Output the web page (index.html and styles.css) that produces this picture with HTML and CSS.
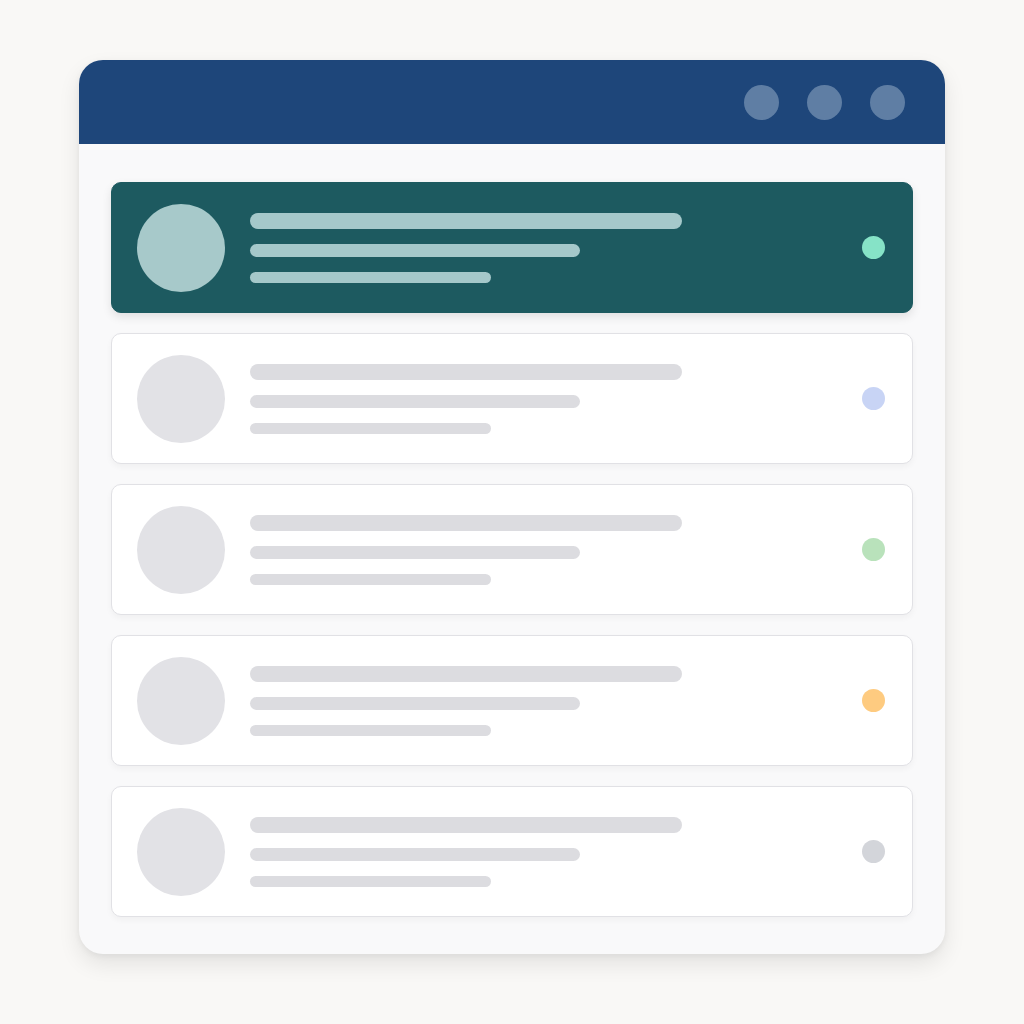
FILE: index.html
```html
<!DOCTYPE html>
<html>
<head>
<meta charset="utf-8">
<link rel="stylesheet" href="styles.css">
</head>
<body>
<div class="window">
  <div class="titlebar">
    <span class="tdot"></span><span class="tdot"></span><span class="tdot"></span>
  </div>
  <div class="list">
    <div class="card active">
      <div class="avatar"></div>
      <div class="lines"><div class="l1"></div><div class="l2"></div><div class="l3"></div></div>
      <div class="status mint"></div>
    </div>
    <div class="card">
      <div class="avatar"></div>
      <div class="lines"><div class="l1"></div><div class="l2"></div><div class="l3"></div></div>
      <div class="status blue"></div>
    </div>
    <div class="card">
      <div class="avatar"></div>
      <div class="lines"><div class="l1"></div><div class="l2"></div><div class="l3"></div></div>
      <div class="status green"></div>
    </div>
    <div class="card">
      <div class="avatar"></div>
      <div class="lines"><div class="l1"></div><div class="l2"></div><div class="l3"></div></div>
      <div class="status orange"></div>
    </div>
    <div class="card">
      <div class="avatar"></div>
      <div class="lines"><div class="l1"></div><div class="l2"></div><div class="l3"></div></div>
      <div class="status gray"></div>
    </div>
  </div>
</div>
</body>
</html>
```
FILE: styles.css
```css
html, body { margin: 0; padding: 0; }
body {
  background: #f9f8f6;
  width: 1024px;
  height: 1024px;
  padding-top: 60px;
  box-sizing: border-box;
  font-family: "Liberation Sans", sans-serif;
}
.window {
  margin-left: 79px;
  width: 866px;
  height: 894px;
  background: #f9f9fa;
  border-radius: 24px;
  box-shadow: 0 10px 22px rgba(0,0,0,0.09), 0 2px 6px rgba(0,0,0,0.05);
  overflow: hidden;
  box-sizing: border-box;
}
.titlebar {
  height: 84px;
  background: #1e467a;
  display: flex;
  align-items: center;
  justify-content: flex-end;
  gap: 28px;
  padding-right: 40px;
  box-sizing: border-box;
}
.tdot {
  width: 35px;
  height: 35px;
  border-radius: 50%;
  background: #5f7ea4;
}
.list {
  padding: 38px 32px 0 32px;
  display: flex;
  flex-direction: column;
  gap: 20px;
}
.card {
  height: 131px;
  box-sizing: border-box;
  border-radius: 10px;
  background: #ffffff;
  border: 1px solid #e1e1e5;
  box-shadow: 0 3px 6px rgba(0,0,0,0.04);
  display: flex;
  align-items: center;
  padding: 0 27px 0 25px;
}
.card.active {
  background: #1d5a60;
  border-color: #1d5a60;
  box-shadow: 0 4px 10px rgba(0,0,0,0.10);
}
.avatar {
  width: 88px;
  height: 88px;
  border-radius: 50%;
  background: #e2e2e6;
  flex: none;
}
.active .avatar { background: #a7c9ca; }
.lines {
  margin-left: 25px;
  flex: 1;
  display: flex;
  flex-direction: column;
  gap: 15px;
}
.lines div { background: #dcdce0; border-radius: 8px; }
.active .lines div { background: #a5c8ca; }
.l1 { width: 432px; height: 16px; }
.l2 { width: 330px; height: 13px; }
.l3 { width: 241px; height: 11px; }
.status {
  width: 23px;
  height: 23px;
  border-radius: 50%;
  flex: none;
}
.mint { background: #86e3c7; }
.blue { background: #c8d4f5; }
.green { background: #b9e2bb; }
.orange { background: #fecb80; }
.gray { background: #d3d5da; }
```
